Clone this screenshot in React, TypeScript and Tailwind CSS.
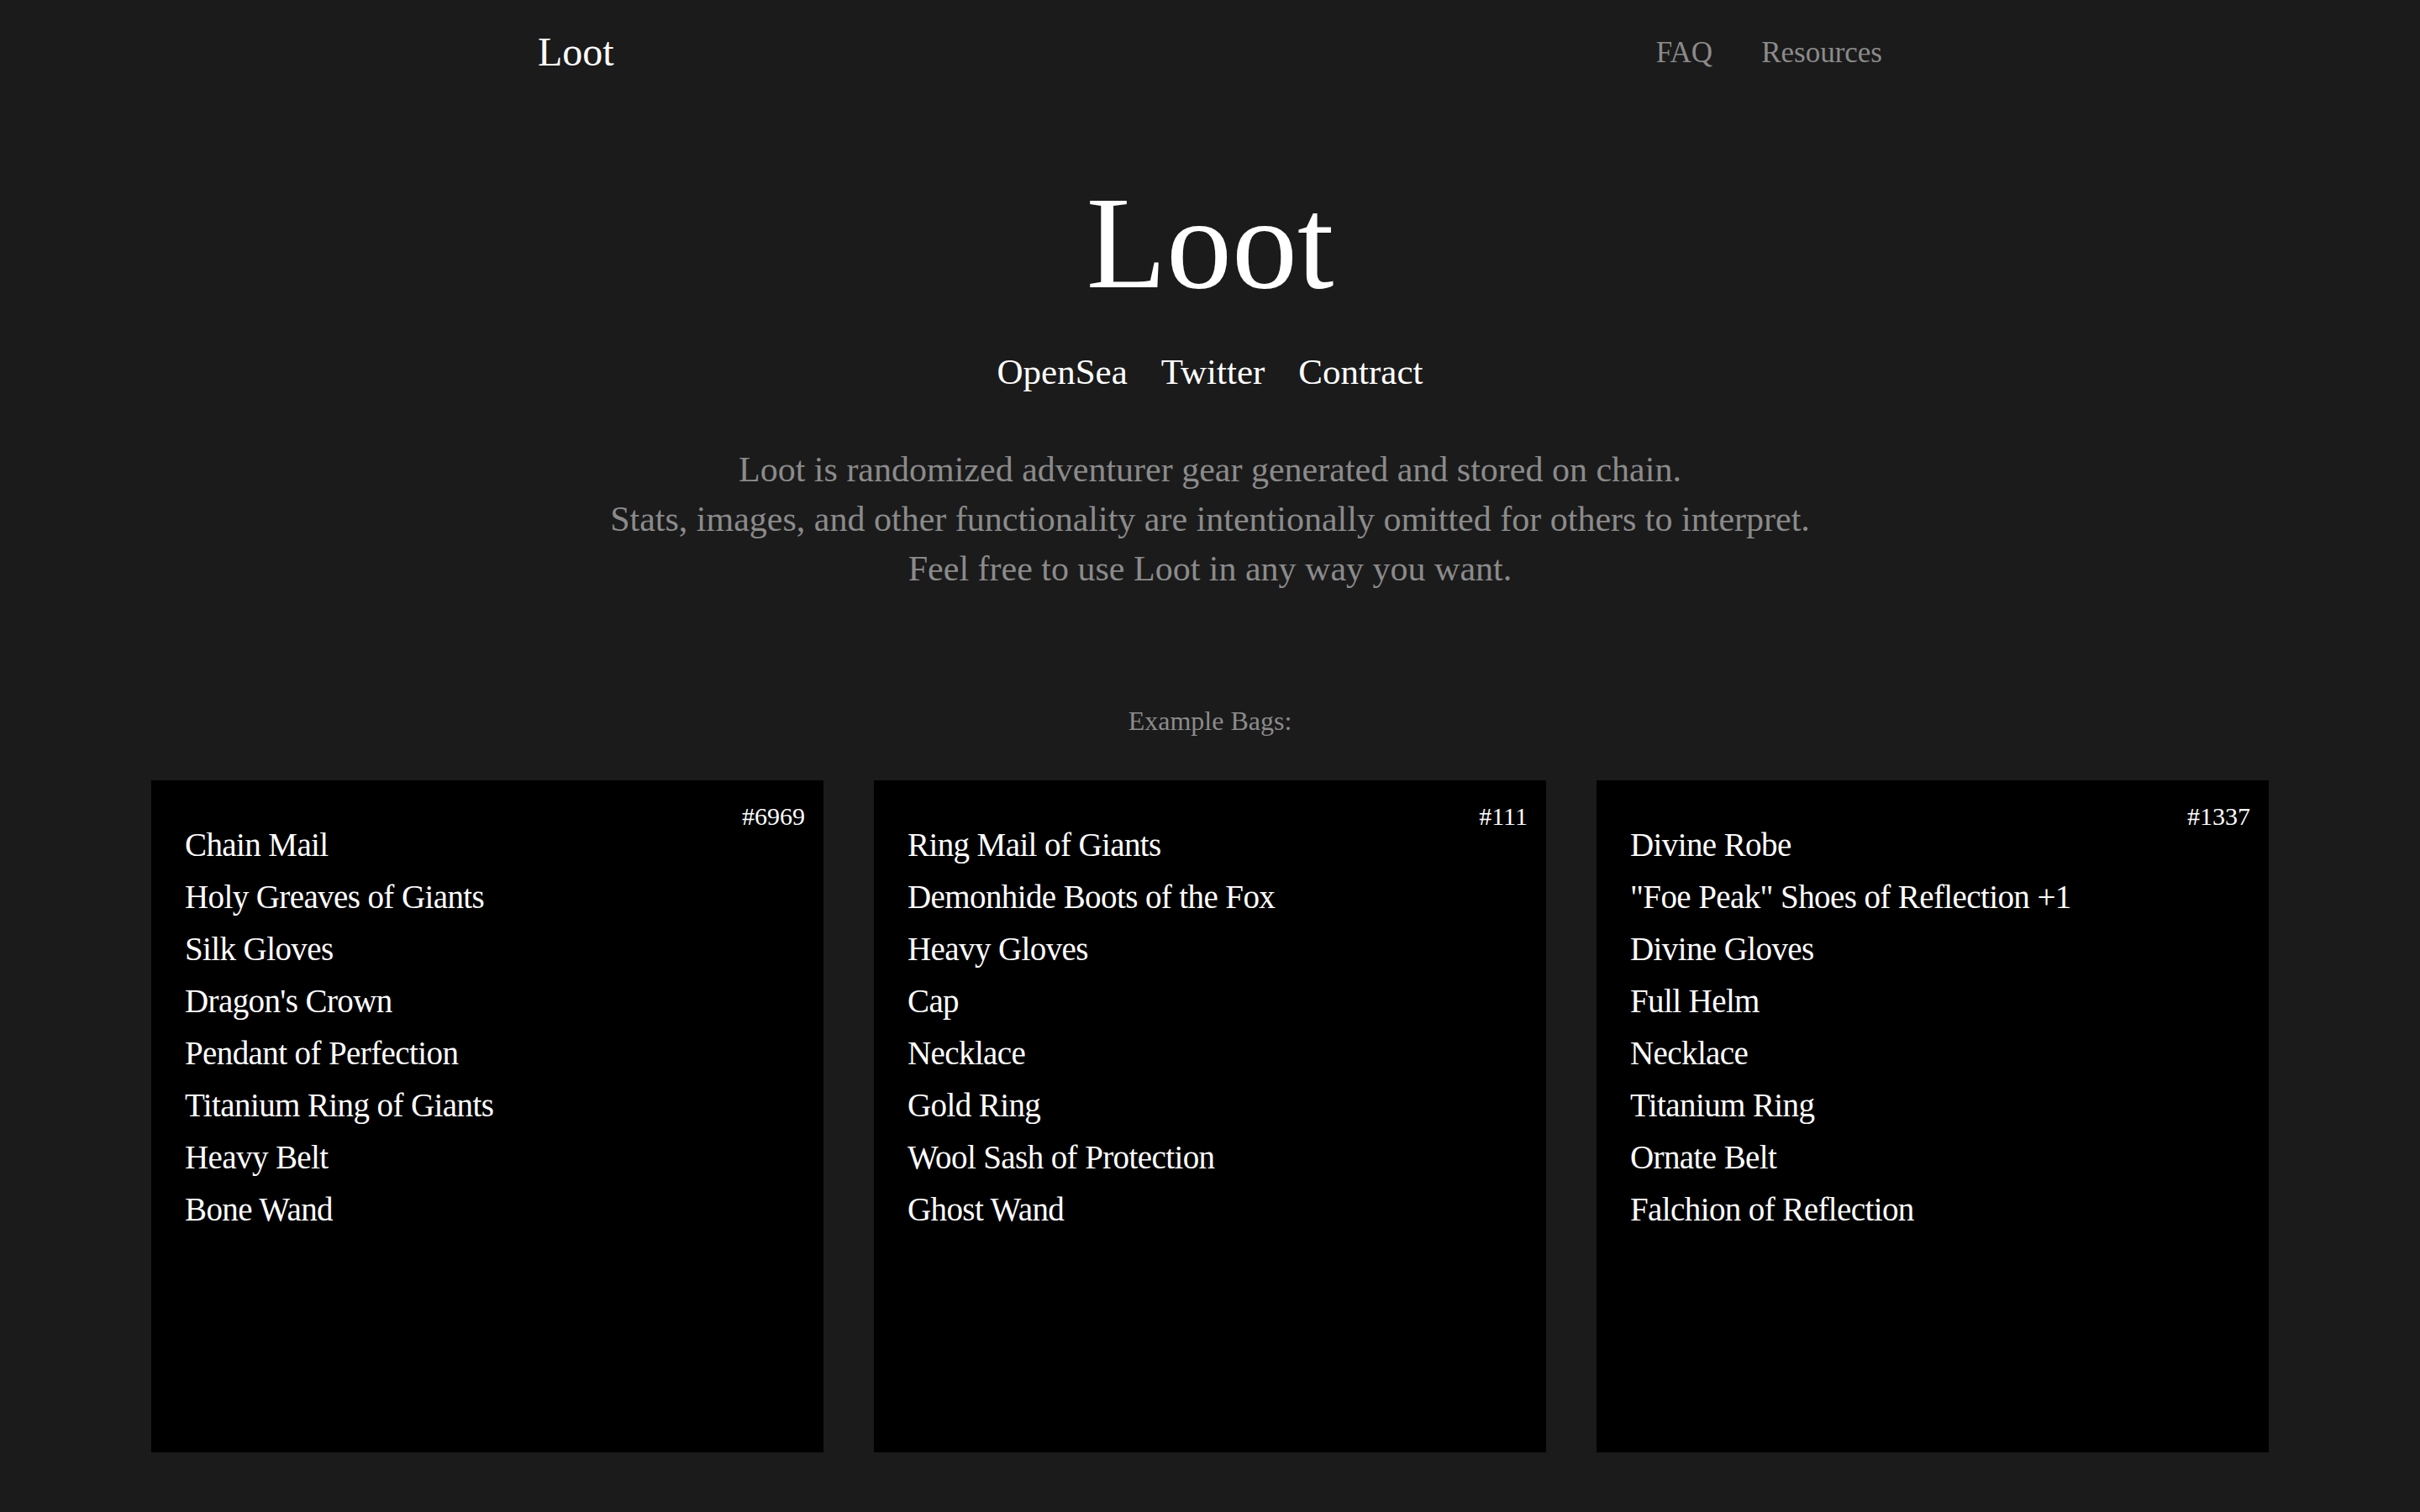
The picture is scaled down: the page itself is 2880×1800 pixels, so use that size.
import React from "react";

const bags = [
  {
    id: "#6969",
    items: [
      "Chain Mail",
      "Holy Greaves of Giants",
      "Silk Gloves",
      "Dragon's Crown",
      "Pendant of Perfection",
      "Titanium Ring of Giants",
      "Heavy Belt",
      "Bone Wand",
    ],
  },
  {
    id: "#111",
    items: [
      "Ring Mail of Giants",
      "Demonhide Boots of the Fox",
      "Heavy Gloves",
      "Cap",
      "Necklace",
      "Gold Ring",
      "Wool Sash of Protection",
      "Ghost Wand",
    ],
  },
  {
    id: "#1337",
    items: [
      "Divine Robe",
      "\"Foe Peak\" Shoes of Reflection +1",
      "Divine Gloves",
      "Full Helm",
      "Necklace",
      "Titanium Ring",
      "Ornate Belt",
      "Falchion of Reflection",
    ],
  },
];

function Bag({ id, items }: { id: string; items: string[] }) {
  return (
    <div className="relative w-[800px] h-[800px] bg-black px-10 pt-[46px]">
      <span className="absolute top-[28px] right-[22px] text-[30px] leading-none text-white">
        {id}
      </span>
      <ul>
        {items.map((item) => (
          <li key={item} className="text-[39px] leading-[62px] tracking-[-0.6px] text-white">
            {item}
          </li>
        ))}
      </ul>
    </div>
  );
}

export default function App() {
  return (
    <div className="min-h-screen w-full bg-[#1b1b1b] font-['Liberation_Serif',serif] pb-[71px]">
      {/* NAV */}
      <header className="h-[124px] w-[1600px] mx-auto flex items-center justify-between">
        <span className="text-[48px] leading-none text-white">Loot</span>
        <nav className="flex items-center gap-[58px] text-[35px] leading-none text-[#8b8b8b]">
          <a>FAQ</a>
          <a>Resources</a>
        </nav>
      </header>

      {/* HERO */}
      <section className="flex flex-col items-center text-center">
        <h1 className="mt-[88px] text-[156px] leading-none text-white">Loot</h1>
        <div className="mt-[53px] flex items-center gap-[40px] text-[43px] leading-none text-white">
          <a>OpenSea</a>
          <a>Twitter</a>
          <a>Contract</a>
        </div>
        <div className="mt-[66px] text-[42px] leading-[59px] text-[#8b8b8b]">
          <p>Loot is randomized adventurer gear generated and stored on chain.</p>
          <p>Stats, images, and other functionality are intentionally omitted for others to interpret.</p>
          <p>Feel free to use Loot in any way you want.</p>
        </div>
        <p className="mt-[135px] text-[32px] leading-none text-[#8b8b8b]">Example Bags:</p>
      </section>

      {/* BAGS */}
      <section className="mt-[55px] flex justify-center gap-[60px]">
        {bags.map((b) => (
          <Bag key={b.id} id={b.id} items={b.items} />
        ))}
      </section>
    </div>
  );
}
